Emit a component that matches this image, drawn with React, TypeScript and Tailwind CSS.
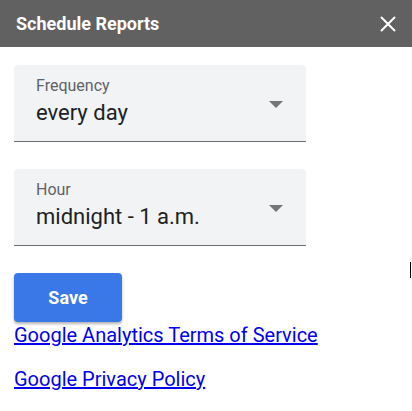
const SelectField = ({ label, value }: { label: string; value: string }) => (
  <div className="relative w-[292px] h-[77px] bg-[#f1f3f4] rounded-t-[4px] border-b border-[#6b6b6b] pl-[22px] pt-[11px]">
    <div className="text-[16px] leading-[20px] text-[#5f6368]">{label}</div>
    <div className="text-[22px] leading-[28px] text-[#202124] mt-[3px]">{value}</div>
    <div className="absolute right-[23px] top-[36px] w-0 h-0 border-l-[7px] border-r-[7px] border-t-[7px] border-l-transparent border-r-transparent border-t-[#757575]" />
  </div>
);

export default function App() {
  return (
    <div className="relative w-[412px] h-[411px] bg-white font-['Roboto',sans-serif]">
      <div className="flex items-center justify-between h-[47px] bg-[#616161] pl-4 pr-4">
        <span className="text-white font-bold text-[18px]">Schedule Reports</span>
        <svg width="16" height="16" viewBox="0 0 16 16" className="text-white">
          <path d="M1 1 L15 15 M15 1 L1 15" stroke="currentColor" strokeWidth="2" fill="none" />
        </svg>
      </div>

      <div className="flex flex-col px-[14px] pt-[18px]">
        <SelectField label="Frequency" value="every day" />
        <div className="h-[27px]" />
        <SelectField label="Hour" value="midnight - 1 a.m." />

        <button className="mt-[27px] w-[108px] h-[49px] rounded-[4px] bg-[#3b78e7] text-white font-bold text-[18px] shadow-[0_2px_3px_rgba(0,0,0,0.3)]">
          Save
        </button>

        <div className="flex flex-col mt-[3px] gap-[23px] text-[20px] leading-[21px] text-[#0000ee]">
          <a href="#" className="underline w-fit">Google Analytics Terms of Service</a>
          <a href="#" className="underline w-fit">Google Privacy Policy</a>
        </div>
      </div>

      <div className="absolute left-[410px] top-[262px] w-[1px] h-[16px] bg-black" />
    </div>
  );
}
